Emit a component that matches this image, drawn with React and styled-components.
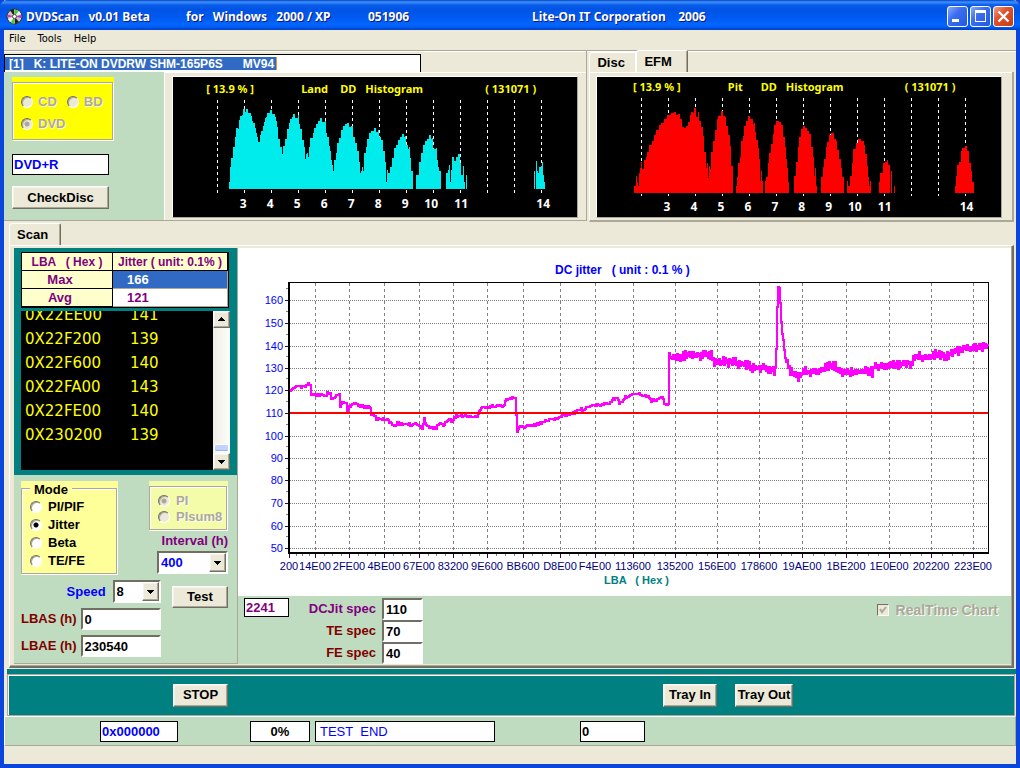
import React from "react";
import styled, { createGlobalStyle, css } from "styled-components";

const Global = createGlobalStyle`
  * { box-sizing: border-box; }
  body { margin: 0; background: #0831d9; }
  body, button, input, select { font: bold 13px/16px "Liberation Sans", Arial, sans-serif; }
`;

const c = {
  face: "#ece9d8",
  light: "#ffffff",
  shade: "#aca899",
  dark: "#716f64",
  mint: "#c0dcc0",
  teal: "#008080",
  blue: "#0000ff",
  purple: "#800080",
  maroon: "#800000",
  select: "#316ac5",
};

/* ---------- window frame ---------- */

const Window = styled.div`
  min-height: 100vh;
  display: flex;
  flex-direction: column;
  background: ${c.face};
  border: solid #0b46dc;
  border-width: 0 4px 4px;
`;

const TitleBar = styled.header`
  display: flex;
  align-items: center;
  height: 30px;
  margin: 0 -4px;
  padding: 3px 6px 0;
  border-radius: 7px 7px 0 0;
  background: linear-gradient(#0a3fc0 0, #3a93ff 2px, #0a5ce8 5px, #0054e3 9px, #0058ee 16px, #0266fe 25px, #005bf5 27px, #0040c0 30px);
  color: #fff;
  font: bold 12px/18px "Noto Sans", sans-serif;
  text-shadow: 1px 1px 0 #0a1883;
  white-space: pre;
  svg { flex: none; }
`;

const TitleText = styled.span`
  width: ${(p) => p.$w}px;
  flex: none;
`;

const TitleButtons = styled.div`
  display: flex;
  gap: 2px;
  margin-left: auto;
`;

const TitleButton = styled.button`
  width: 21px;
  height: 21px;
  padding: 0;
  border: 1px solid #fff;
  border-radius: 3px;
  background: ${(p) =>
    p.$close
      ? "linear-gradient(135deg, #f0a088, #e0512b 40%, #c83c12)"
      : "linear-gradient(135deg, #8cabf5, #3a6df0 40%, #2458e0)"};
  svg { display: block; }
`;

const MenuBar = styled.nav`
  display: flex;
  gap: 12px;
  height: 21px;
  padding: 0 5px 2px;
  border-bottom: 1px solid ${c.shade};
  box-shadow: 0 1px 0 #fff;
`;

const MenuItem = styled.button`
  padding: 0;
  border: 0;
  background: none;
  font: 11px/16px "DejaVu Sans Condensed", "DejaVu Sans", sans-serif;
`;

/* ---------- shared controls ---------- */

const raised = css`
  border: 1px solid;
  border-color: #fff ${c.dark} ${c.dark} #fff;
  box-shadow: inset -1px -1px 0 ${c.shade}, inset 1px 1px 0 #f6f4ea;
  background: ${c.face};
`;

const PushButton = styled.button`
  ${raised}
  width: ${(p) => p.$w}px;
  height: ${(p) => p.$h || 23}px;
  padding: 0;
  white-space: nowrap;
`;

const SunkenInput = styled.input`
  width: ${(p) => p.$w}px;
  height: 22px;
  padding: 0 2px;
  border: 2px solid;
  border-color: ${c.dark} #fff #fff ${c.dark};
  border-radius: 0;
  background: #fff;
  outline: 0;
`;

const FlatInput = styled.input`
  width: ${(p) => p.$w}px;
  height: ${(p) => p.$h || 21}px;
  padding: 0 1px;
  border: 1px solid #000;
  border-radius: 0;
  background: #fff;
  color: ${(p) => p.$color || "#000"};
  text-align: ${(p) => (p.$center ? "center" : "left")};
  outline: 0;
  ${(p) => p.$plain && "font-weight: normal; padding-left: 4px;"}
`;

const SelectBox = styled.span`
  position: relative;
  display: inline-block;
  width: ${(p) => p.$w}px;
  height: 23px;
  select {
    appearance: none;
    width: 100%;
    height: 100%;
    padding: 0 2px;
    border: 2px solid;
    border-color: ${c.dark} #fff #fff ${c.dark};
    border-radius: 0;
    background: #fff;
    color: ${(p) => p.$color || "#000"};
  }
  svg {
    ${raised}
    position: absolute;
    top: 2px;
    right: 2px;
    pointer-events: none;
  }
`;

const Arrow = ({ up, w = 17, h = 19 }) => (
  <svg width={w} height={h} viewBox="-7 -8 15 17" shapeRendering="crispEdges" aria-hidden="true">
    <path d={up ? "M0-2h1v1h1v1h1v1h1v1h-7v-1h1v-1h1v-1h1z" : "M-3-1h7v1h-1v1h-1v1h-1v1h-1v-1h-1v-1h-1v-1h-1z"} fill="#000" />
  </svg>
);

const Select = ({ w, color, value, id }) => (
  <SelectBox $w={w} $color={color}>
    <select id={id} defaultValue={value}>
      <option>{value}</option>
    </select>
    <Arrow />
  </SelectBox>
);

const Option = styled.label`
  display: flex;
  align-items: center;
  gap: ${(p) => p.$gap || 6}px;
  line-height: ${(p) => p.$line || 16}px;
  color: ${(p) => (p.$off ? c.shade : "#000")};
  ${(p) => p.$off && "text-shadow: 1px 1px 0 #fff;"}
  input {
    appearance: none;
    flex: none;
    width: 12px;
    height: 12px;
    margin: 0;
    border: 1px solid;
    border-color: ${c.dark} #fff #fff ${c.dark};
    border-radius: 50%;
    background: ${(p) => (p.$off ? c.face : "#fff")};
    box-shadow: inset 1px 1px 0 ${c.shade};
  }
  input:checked {
    background: radial-gradient(circle, ${(p) => (p.$off ? c.shade : "#000")} 2px, ${(p) => (p.$off ? c.face : "#fff")} 3px);
  }
`;

const Check = styled.label`
  display: flex;
  align-items: center;
  gap: 7px;
  color: ${c.shade};
  text-shadow: 1px 1px 0 #fff;
  font-size: 14px;
  span { position: relative; display: flex; }
  input {
    appearance: none;
    width: 12px;
    height: 12px;
    margin: 0;
    border: 1px solid;
    border-color: ${c.dark} #fff #fff ${c.dark};
    background: ${c.face};
  }
  svg { position: absolute; inset: 0; }
`;

const Group = styled.fieldset`
  min-width: 0;
  margin: 0;
  padding: ${(p) => p.$pad};
  border: 1px solid ${c.shade};
  box-shadow: 1px 1px 0 #fff, inset 1px 1px 0 #fff;
  display: flex;
  flex-direction: column;
  gap: ${(p) => p.$gap || 0}px;
  legend { padding: 3px 4px 0; line-height: 11px; background: #ffff99; }
`;

const GroupPad = styled.div`
  width: ${(p) => p.$w}px;
  padding: ${(p) => p.$top}px 1px 1px 0;
  background: ${(p) => p.$bg};
`;

const Row = styled.div`
  display: flex;
  gap: ${(p) => p.$gap || 0}px;
  align-items: center;
`;

/* ---------- upper panes ---------- */

const Upper = styled.section`
  display: flex;
  gap: 2px;
  height: 170px;
  padding: 0 2px 0 0;
`;

const DrivePane = styled.div`
  display: flex;
  flex-direction: column;
  flex: 583 1 0;
  padding-top: 3px;
  border: solid ${c.shade};
  border-width: 0 1px 1px 0;
`;

const DriveField = styled.input`
  width: 417px;
  height: 19px;
  padding: 1px 0 0 4px;
  border: solid #000;
  border-width: 1px 1px 0;
  border-radius: 0;
  color: #fff;
  white-space: pre;
  outline: 0;
  background: linear-gradient(90deg, ${c.select} 271px, #e0963c 271px, #e0963c 272px, #fff 272px) 0 2px / 100% 13px no-repeat #fff;
  font: bold 12px/16px "Liberation Sans", Arial, sans-serif;
`;

const DriveBody = styled.div`
  display: flex;
  flex: 1;
`;

const DiscColumn = styled.div`
  display: flex;
  flex-direction: column;
  align-items: flex-start;
  width: 161px;
  padding: 5px 8px;
  border-right: 1px solid #fff;
  background: ${c.mint};
`;

const Spaced = styled.div`
  display: flex;
  margin-top: ${(p) => p.$t}px;
`;

const PlotPane = styled.div`
  flex: 1;
  min-width: 0;
  padding: 3px ${(p) => p.$r}px 2px ${(p) => p.$l}px;
  border-top: 1px solid #fff;
`;

const PlotFrame = styled.div`
  border: 1px solid;
  border-color: #fff ${c.shade} ${c.shade} #fff;
  background: #000;
  overflow: hidden;
  svg { display: block; width: 100%; height: 140px; }
`;

const EfmPane = styled.div`
  display: flex;
  flex-direction: column;
  flex: 425 1 0;
`;

const Tabs = styled.div`
  display: flex;
  align-items: flex-end;
  height: ${(p) => p.$h}px;
  padding-left: ${(p) => p.$left || 0}px;
`;

const Tab = styled.button`
  width: ${(p) => p.$w}px;
  height: ${(p) => (p.$active ? 22 : 20)}px;
  padding: 0 0 0 7px;
  text-align: left;
  border: solid;
  border-width: 1px 1px 0;
  border-color: #fff ${(p) => (p.$active ? c.dark : "#fff")} #fff #fff;
  border-radius: 3px 2px 0 0;
  background: ${c.face};
  ${(p) => p.$active && `box-shadow: inset -1px 0 0 ${c.shade};`}
`;

const EfmPage = styled.div`
  flex: 1;
  border: solid;
  border-width: 0 2px 2px 1px;
  border-color: #fff ${c.shade} ${c.shade} #fff;
`;

/* ---------- scan page ---------- */

const ScanPage = styled.main`
  display: flex;
  flex: 1;
  margin: 0 2px 0 5px;
  padding: 2px 1px 2px 4px;
  border: solid;
  border-width: 1px 2px 2px 1px;
  border-color: #fff ${c.dark} ${c.dark} #fff;
  box-shadow: inset -1px -1px 0 ${c.shade};
`;

const Side = styled.div`
  flex: none;
  width: 224px;
  display: flex;
  flex-direction: column;
  border-right: 1px solid ${c.shade};
  border-bottom: 1px solid ${c.shade};
  background: ${c.mint};
`;

const Readout = styled.div`
  padding: 4px 7px 5px;
  background: ${c.teal};
`;

const Stats = styled.table`
  width: 208px;
  border: 1px solid #000;
  border-collapse: separate;
  border-spacing: 0;
  background: #fff;
  color: ${c.purple};
  font-size: 12px;
  th, td { height: 18px; padding: 0; line-height: 16px; white-space: pre; }
  th { width: 91px; background: #ffffcc; border: solid #000; border-width: 0 1px 1px 0; }
  thead th + th { width: 115px; }
  tbody { font-size: 13px; }
  td { padding-left: 14px; border: solid ${c.shade}; border-width: 0 1px 1px 0; }
  tbody th { padding-right: 14px; }
`;

const SelectedCell = styled.td`
  background: ${c.select};
  color: #fff;
`;

const LogBox = styled.div`
  display: flex;
  width: 209px;
  height: 159px;
  margin-top: 3px;
  background: #000;
`;

const Log = styled.ol`
  display: flex;
  flex: 1;
  flex-direction: column;
  justify-content: flex-end;
  margin: 0;
  padding: 0 0 23px 4px;
  overflow: hidden;
  list-style: none;
  color: #ff0;
  font: 15px/24px "DejaVu Sans", Verdana, sans-serif;
  li { flex: none; display: grid; grid-template-columns: 105px 1fr; }
`;

const ScrollBar = styled.div`
  display: flex;
  flex-direction: column;
  width: 17px;
  background: linear-gradient(90deg, #f0efe6, #fdfdfa);
`;

const ScrollButton = styled.button`
  ${raised}
  display: flex;
  width: 17px;
  height: 17px;
  padding: 0;
`;

const Thumb = styled.div`
  height: 8px;
  margin: auto 1px 1px;
  border: 1px solid #fff;
  border-radius: 2px;
  background: #c1d2fb;
  box-shadow: inset 0 -1px 0 #98b0e8;
`;

const Form = styled.div`
  display: flex;
  justify-content: space-between;
  align-items: flex-start;
  padding: ${(p) => p.$t}px 9px 0 7px;
`;

const Stack = styled.div`
  display: flex;
  flex-direction: column;
  align-items: flex-end;
  gap: ${(p) => p.$gap}px;
`;

const Caption = styled.label`
  color: ${(p) => p.$color};
  white-space: nowrap;
`;

const Right = styled.div`
  display: flex;
  flex-direction: column;
  flex: 1;
  min-width: 0;
  background: ${c.mint};
`;

const ChartPane = styled.div`
  padding-top: 2px;
  background: #fff;
  svg { display: block; width: 100%; height: 346px; }
`;

const SpecBar = styled.div`
  display: flex;
  align-items: flex-start;
  padding: 2px 13px 0 6px;
`;

const Specs = styled.div`
  display: grid;
  grid-template-columns: 87px 41px;
  align-items: center;
  gap: 0 6px;
  justify-items: end;
`;

const Push = styled.div`
  margin: 4px 0 0 auto;
`;

/* ---------- footer ---------- */

const TealStrip = styled.div`
  height: 5px;
  margin: 1px 0 0 3px;
  background: ${c.teal};
`;

const Commands = styled.div`
  display: flex;
  align-items: center;
  gap: 18px;
  height: 42px;
  margin: 0 1px 0 3px;
  padding-left: 165px;
  background: ${c.teal};
  border: 1px solid ${c.shade};
  box-shadow: inset 1px 1px 0 #fff;
`;

const Gap = styled.span`
  flex: 0 0 ${(p) => p.$w}px;
`;

const Status = styled.div`
  display: flex;
  align-items: center;
  height: 30px;
  padding: 0 0 0 95px;
  background: ${c.mint};
  border: solid;
  border-width: 1px;
  border-color: #fff ${c.shade} ${c.shade} #fff;
`;

const BottomBar = styled.footer`
  height: 18px;
`;

/* ---------- histograms ---------- */

// Samples are [x, y] pairs in thirds of a pixel; each holds until the next one.
const LAND = [
  [207,395],[210,350],[213,325],[219,290],[225,262],[228,235],[234,238],[237,210],[240,198],[246,195],[249,178],[255,186],[258,178],[264,190],[273,197],[276,212],[279,220],[285,235],[288,250],[291,262],[294,276],[300,255],[303,244],[309,228],[312,216],[315,205],[318,200],[321,190],[327,188],[330,181],[336,192],[345,202],[348,212],[351,232],[354,268],[360,290],[366,312],[369,288],[375,268],[381,238],[387,220],[390,208],[396,200],[399,192],[405,205],[414,196],[417,222],[420,236],[426,270],[432,292],[435,327],[438,312],[441,308],[444,320],[447,292],[450,264],[459,250],[462,235],[468,222],[474,212],[480,205],[486,216],[495,214],[498,250],[501,260],[507,288],[510,304],[513,330],[516,345],[519,362],[522,330],[528,308],[531,278],[537,265],[543,240],[549,228],[555,222],[561,219],[567,230],[573,228],[579,262],[585,280],[591,302],[597,335],[600,370],[603,362],[606,350],[609,364],[612,310],[618,290],[621,266],[627,250],[633,242],[642,234],[648,246],[654,240],[657,262],[663,270],[669,304],[675,335],[678,395],[681,360],[684,370],[690,350],[696,325],[702,294],[708,284],[714,270],[720,260],[726,252],[732,262],[735,258],[738,285],[744,296],[747,290],[750,325],[753,362],[759,416],
  [768,375],[777,335],[783,308],[789,285],[795,272],[801,268],[807,255],[813,268],[816,264],[819,298],[828,295],[831,330],[834,350],[837,362],[843,416],
  [858,368],[864,360],[867,345],[870,396],[873,360],[876,322],[882,332],[888,320],[894,312],[900,340],[903,375],[909,348],[912,396],[915,416],[918,375],[921,416],
  [1122,362],[1125,416],[1128,333],[1131,362],[1134,370],[1137,350],[1143,348],[1146,336],[1149,375],[1152,396],[1155,416],
];

const PIT = [
  [162,558],[168,528],[171,545],[174,558],[177,520],[180,505],[183,486],[186,508],[192,480],[198,470],[201,455],[207,435],[216,422],[222,405],[228,390],[237,375],[243,368],[252,356],[261,345],[267,346],[273,340],[282,336],[288,344],[294,342],[300,356],[306,380],[312,384],[318,378],[324,366],[330,346],[333,336],[339,340],[342,324],[348,350],[354,335],[357,362],[363,382],[369,408],[372,456],[378,505],[381,488],[384,535],[387,498],[390,508],[393,455],[399,422],[405,390],[411,358],[414,348],[423,333],[429,348],[435,352],[438,378],[444,404],[450,438],[453,498],[459,579],
  [468,558],[471,530],[474,490],[480,470],[483,424],[489,408],[492,378],[498,362],[504,348],[510,358],[519,372],[522,368],[525,396],[528,420],[534,445],[537,476],[540,544],[543,514],[546,544],[549,579],
  [555,544],[558,530],[564,490],[567,460],[573,432],[579,402],[582,374],[588,362],[597,366],[603,376],[609,410],[615,440],[618,478],[621,505],[624,545],[627,579],
  [642,528],[648,486],[654,440],[657,410],[663,388],[669,378],[675,384],[681,392],[687,402],[693,440],[699,472],[702,528],[705,505],[708,558],[711,579],
  [723,532],[729,502],[732,476],[738,440],[741,425],[747,404],[753,400],[762,418],[768,424],[771,450],[777,478],[783,505],[786,530],[792,579],
  [801,544],[804,558],[810,528],[816,490],[819,448],[828,430],[834,416],[843,424],[852,435],[855,462],[861,498],[864,530],[867,558],[870,544],[873,579],
  [897,545],[900,520],[906,518],[909,490],[915,486],[921,480],[924,494],[930,579],[933,514],[936,579],[942,558],[945,579],
  [1125,558],[1128,528],[1131,496],[1137,486],[1143,454],[1146,444],[1155,438],[1161,454],[1167,490],[1173,514],[1176,545],[1182,579],
];

function columns(samples, ox, oy, base) {
  let d = `M${samples[0][0] / 3 - ox} ${base}`;
  samples.forEach(([x, y]) => {
    d += `H${Math.round(x / 3 - ox)}V${Math.round(y / 3 - oy)}`;
  });
  return d + `V${base}Z`;
}

const BINS = [["3", 70], ["4", 97], ["5", 124], ["6", 151], ["7", 178], ["8", 205], ["9", 232], ["10", 258], ["11", 288], ["14", 370]];
const GRID = [44, 71, 98, 125, 152, 179, 206, 233, 260, 287, 314, 341, 368];

function Histogram({ title, names, d, color, top, bottom, labelY, titleY, shareX, totalX }) {
  return (
    <svg viewBox="0 0 404 140" role="img" aria-label={title}>
      <g stroke="#fff" strokeDasharray="3 3" shapeRendering="crispEdges">
        {GRID.map((x) => <line key={x} x1={x + 0.5} x2={x + 0.5} y1={top} y2={bottom} />)}
      </g>
      <path d={d} fill={color} shapeRendering="crispEdges" />
      <g fill="#ff0" fontFamily="Noto Sans, sans-serif" fontWeight="bold" fontSize="11">
        <text x={shareX} y={titleY}>[ 13.9&nbsp;% ]</text>
        {names.map(([t, x]) => <text key={t} x={x} y={titleY}>{t}</text>)}
        <text x={totalX} y={titleY}>( 131071 )</text>
      </g>
      <g fill="#fff" fontFamily="Noto Sans, sans-serif" fontWeight="bold" fontSize="12" textAnchor="middle">
        {BINS.map(([t, x]) => <text key={t} x={x} y={labelY}>{t}</text>)}
      </g>
    </svg>
  );
}

/* ---------- jitter chart ---------- */

const TRACE = [
  [152,428],[155,418],[165,412],[200,411],[205,402],[213,405],[213,440],[220,434],[262,438],[263,425],[273,432],[273,450],[280,442],[300,435],[303,468],[312,455],[321,460],[321,482],[330,472],[345,460],[352,458],[360,468],[375,470],[375,482],[380,472],[393,470],[393,492],[405,495],[412,508],[425,505],[445,508],[455,522],[470,526],[475,519],[490,525],[500,519],[515,525],[525,521],[540,525],[550,535],[555,508],[560,520],[568,534],[590,534],[600,521],[615,525],[622,510],[640,512],[650,498],[715,500],[720,480],[730,472],[795,466],[800,450],[825,443],[830,443],[832,540],[834,546],[840,532],[850,532],[870,526],[890,525],[910,516],[930,508],[950,508],[960,498],[990,492],[1010,486],[1016,476],[1033,480],[1045,472],[1055,466],[1085,465],[1110,458],[1120,448],[1135,442],[1140,460],[1150,458],[1156,442],[1185,435],[1195,428],[1210,438],[1225,436],[1235,452],[1255,448],[1270,438],[1274,463],[1287,460],[1287,320],[1300,325],[1340,315],[1390,315],[1418,316],[1423,335],[1450,335],[1490,338],[1520,345],[1540,355],[1570,352],[1605,360],[1608,350],[1612,280],[1614,172],[1617,112],[1620,115],[1624,172],[1627,240],[1632,270],[1637,320],[1645,345],[1655,365],[1680,382],[1690,368],[1740,362],[1762,355],[1765,345],[1790,348],[1795,362],[1820,366],[1860,365],[1900,365],[1905,350],[1960,346],[2020,338],[2025,320],[2070,322],[2090,315],[2115,318],[2130,322],[2135,305],[2160,303],[2170,294],[2175,288],[2185,295],[2205,298],[2225,290],[2245,288],[2248,280],
];

function jitterPath() {
  let d = "";
  let seg = 0;
  for (let px = 51; px <= 749; px++) {
    const x = px * 3;
    while (seg < TRACE.length - 2 && TRACE[seg + 1][0] < x) seg++;
    const [x0, y0] = TRACE[seg];
    const [x1, y1] = TRACE[seg + 1];
    const t = x1 === x0 ? 1 : Math.min(1, Math.max(0, (x - x0) / (x1 - x0)));
    const y = (y0 + (y1 - y0) * t) / 3;
    const wave = Math.sin(px * 12.9898) * 43758.5453;
    const rnd = wave - Math.floor(wave);
    const spike = x > 1605 && x < 1640;
    let off = Math.round((rnd - 0.5) * 3);
    if (x > 1287) off = (px % 2 ? 1 : -1) * (1 + rnd * rnd * 4);
    if (spike) off = 0;
    const row = Math.round(y + off);
    d += d ? `H${px}V${row}` : `M${px} ${row}`;
  }
  return d;
}

const Y_TICKS = [[160, 50], [150, 73], [140, 96], [130, 118], [120, 140], [110, 163], [100, 186], [90, 208], [80, 230], [70, 253], [60, 276], [50, 298]];
const X_TICKS = [["200", 50], ["14E00", 76], ["2FE00", 110], ["4BE00", 145], ["67E00", 180], ["83200", 214], ["9E600", 248], ["BB600", 284], ["D8E00", 321], ["F4E00", 356], ["113600", 394], ["135200", 436], ["156E00", 478], ["178600", 520], ["19AE00", 563], ["1BE200", 607], ["1E0E00", 650], ["202200", 692], ["223E00", 734]];

function JitterChart() {
  return (
    <svg viewBox="0 0 771 346" role="img" aria-label="DC jitter chart" fontFamily="Liberation Sans, Arial, sans-serif" fontWeight="normal">
      <g fontWeight="bold">
        <text x="316" y="24" fill="#0000ff" fontSize="12">DC jitter &nbsp;&nbsp;( unit : 0.1 % )</text>
        <text x="365" y="334" fill={c.teal} fontSize="11">LBA &nbsp;&nbsp;( Hex )</text>
      </g>
      <g shapeRendering="crispEdges" stroke="#808080">
        {Y_TICKS.map(([v, y]) => <line key={v} x1="51" x2="749" y1={y + 0.5} y2={y + 0.5} strokeDasharray="1 1" />)}
        {X_TICKS.slice(1).map(([v, x]) => <line key={v} x1={x + 0.5} x2={x + 0.5} y1="33" y2="302" strokeDasharray="3 3" />)}
        {Y_TICKS.map(([v, y]) => <line key={v} x1="47" x2="50" y1={y - 11.5} y2={y - 11.5} />)}
        {X_TICKS.slice(0, -1).map(([v, x], i) => {
          const step = (X_TICKS[i + 1][1] - x) / 4;
          return [1, 2, 3].map((k) => <line key={v + k} x1={Math.round(x + step * k) + 0.5} x2={Math.round(x + step * k) + 0.5} y1="303" y2="306" />);
        })}
      </g>
      <g shapeRendering="crispEdges" stroke="#400040">
        {Y_TICKS.map(([v, y]) => <line key={v} x1="46" x2="50" y1={y + 0.5} y2={y + 0.5} />)}
        {X_TICKS.map(([v, x]) => <line key={v} x1={x + 0.5} x2={x + 0.5} y1="303" y2="308" />)}
      </g>
      <g shapeRendering="crispEdges" fill="none">
        <path d="M50 32.5H749.5V303" stroke="#000" />
        <path d="M50 32V303H750" stroke="#000" strokeWidth="2" />
        <path d={jitterPath()} stroke="#ff00ff" strokeWidth="2" />
        <path d="M51 163H749" stroke="#ff0000" strokeWidth="2" />
      </g>
      <g fill="#0000ff" fontSize="11" textAnchor="end">
        {Y_TICKS.map(([v, y]) => <text key={v} x="44" y={y + 4}>{v}</text>)}
      </g>
      <g fill="#000080" fontSize="11" textAnchor="middle">
        {X_TICKS.map(([v, x]) => <text key={v} x={x} y="320">{v}</text>)}
      </g>
    </svg>
  );
}

const DiscIcon = () => (
  <svg width="17" height="17" viewBox="0 0 17 17" aria-hidden="true">
    <circle cx="8.5" cy="8.5" r="7.5" fill="#c8c8c8" stroke="#303030" />
    <path d="M8.5 8.5 4 2.5 8 1z" fill="#202020" />
    <path d="M8.5 8.5 9 1.5 13 3z" fill="#40d030" />
    <path d="M8.5 8.5 13 3 15 6z" fill="#f0f0f0" />
    <path d="M8.5 8.5 15.5 7 15.5 10z" fill="#b030c0" />
    <path d="M8.5 8.5 13 14 9 16z" fill="#202020" />
    <path d="M8.5 8.5 8 16 5 15z" fill="#40d030" />
    <path d="M8.5 8.5 4 14 2 11z" fill="#f4f4f4" />
    <path d="M8.5 8.5 1.5 9.5 1.5 6.5z" fill="#d040a0" />
    <circle cx="8.5" cy="8.5" r="2" fill="#fff" stroke="#505050" />
  </svg>
);

const LOG = [["0X22EE00", "141"], ["0X22F200", "139"], ["0X22F600", "140"], ["0X22FA00", "143"], ["0X22FE00", "140"], ["0X230200", "139"]];

export default function App() {
  return (
    <>
      <Global />
      <Window>
        <TitleBar>
          <DiscIcon />
          <Gap $w={3} />
          <TitleText $w={160}>{"DVDScan   v0.01 Beta"}</TitleText>
          <TitleText $w={182}>{"for   Windows   2000 / XP"}</TitleText>
          <TitleText $w={164}>051906</TitleText>
          <TitleText $w={200}>{"Lite-On IT Corporation    2006"}</TitleText>
          <TitleButtons>
            <TitleButton aria-label="Minimize">
              <svg width="19" height="19" aria-hidden="true"><path d="M4 12h7v3H4z" fill="#fff" /></svg>
            </TitleButton>
            <TitleButton aria-label="Maximize">
              <svg width="19" height="19" aria-hidden="true"><path d="M4 3h11v12H4zM5 6v8h9V6z" fill="#fff" fillRule="evenodd" /></svg>
            </TitleButton>
            <TitleButton $close aria-label="Close">
              <svg width="19" height="19" aria-hidden="true"><path d="M4.5 4.5l10 10M14.5 4.5l-10 10" stroke="#fff" strokeWidth="2.4" /></svg>
            </TitleButton>
          </TitleButtons>
        </TitleBar>

        <MenuBar>
          <MenuItem>File</MenuItem>
          <MenuItem>Tools</MenuItem>
          <MenuItem>Help</MenuItem>
        </MenuBar>

        <Upper>
          <DrivePane>
            <DriveField aria-label="Drive" readOnly value={"[1]   K: LITE-ON DVDRW SHM-165P6S      MV94"} />
            <DriveBody>
              <DiscColumn>
                <GroupPad $w={102} $top={5} $bg="#ffff00">
                  <Group $pad="11px 8px 7px" $gap={6} aria-label="Disc type">
                    <Row $gap={10}>
                      <Option $off $gap={5}><input type="radio" name="disc" disabled />CD</Option>
                      <Option $off $gap={5}><input type="radio" name="disc" disabled />BD</Option>
                    </Row>
                    <Option $off $gap={5}><input type="radio" name="disc" disabled defaultChecked />DVD</Option>
                  </Group>
                </GroupPad>
                <Spaced $t={13}><FlatInput $w={97} $color={c.blue} aria-label="Media" readOnly value="DVD+R" /></Spaced>
                <Spaced $t={11}><PushButton $w={97}>CheckDisc</PushButton></Spaced>
              </DiscColumn>
              <PlotPane $l={7} $r={8}>
                <PlotFrame>
                  <Histogram title="Land DD Histogram" names={[["Land", 128], ["DD", 167], ["Histogram", 192]]} d={columns(LAND, 13, 27, 112)} color="#00ebeb" top={23} bottom={116} labelY={131} titleY={16} shareX={33} totalX={312} />
                </PlotFrame>
              </PlotPane>
            </DriveBody>
          </DrivePane>
          <EfmPane>
            <Tabs $h={21}>
              <Tab $w={47}>Disc</Tab>
              <Tab $w={52} $active>EFM</Tab>
            </Tabs>
            <EfmPage>
              <PlotPane $l={6} $r={10}>
                <PlotFrame>
                  <Histogram title="Pit DD Histogram" names={[["Pit", 131], ["DD", 164], ["Histogram", 189]]} d={columns(PIT, 17, 77, 116)} color="#ff0000" top={21} bottom={119} labelY={134} titleY={14} shareX={36} totalX={308} />
                </PlotFrame>
              </PlotPane>
            </EfmPage>
          </EfmPane>
        </Upper>

        <Tabs $h={24} $left={5}>
          <Tab $w={52} $active>Scan</Tab>
        </Tabs>
        <ScanPage>
          <Side>
            <Readout>
              <Stats>
                <thead><tr><th>{"LBA   ( Hex )"}</th><th>{"Jitter ( unit: 0.1% )"}</th></tr></thead>
                <tbody>
                  <tr><th>Max</th><SelectedCell>166</SelectedCell></tr>
                  <tr><th>Avg</th><td>121</td></tr>
                </tbody>
              </Stats>
              <LogBox>
                <Log>
                  {LOG.map(([a, v]) => <li key={a}><span>{a}</span><span>{v}</span></li>)}
                </Log>
                <ScrollBar>
                  <ScrollButton aria-label="Scroll up"><Arrow up w={15} h={15} /></ScrollButton>
                  <Thumb />
                  <ScrollButton aria-label="Scroll down"><Arrow w={15} h={15} /></ScrollButton>
                </ScrollBar>
              </LogBox>
            </Readout>

            <Form $t={6}>
              <GroupPad $w={97} $top={0} $bg="#ffff99">
                <Group $pad="3px 8px">
                  <legend>Mode</legend>
                  {["PI/PIF", "Jitter", "Beta", "TE/FE"].map((m) => (
                    <Option key={m} $line={18}><input type="radio" name="mode" defaultChecked={m === "Jitter"} />{m}</Option>
                  ))}
                </Group>
              </GroupPad>
              <Stack $gap={2}>
                <GroupPad $w={79} $top={5} $bg="#f4fcaa">
                  <Group $pad="6px 8px 4px" aria-label="Error type">
                    <Option $off><input type="radio" name="pi" disabled defaultChecked />PI</Option>
                    <Option $off><input type="radio" name="pi" disabled />PIsum8</Option>
                  </Group>
                </GroupPad>
                <Caption htmlFor="interval" $color={c.purple}>Interval (h)</Caption>
                <Select id="interval" w={71} color={c.blue} value="400" />
              </Stack>
            </Form>
            <Form $t={5}>
              <Stack $gap={5}>
                <Row $gap={7}><Caption htmlFor="speed" $color={c.blue}>Speed</Caption><Select id="speed" w={48} value="8" /></Row>
                <Row $gap={4}><Caption htmlFor="lbas" $color={c.maroon}>LBAS (h)</Caption><SunkenInput id="lbas" $w={80} defaultValue="0" /></Row>
                <Row $gap={4}><Caption htmlFor="lbae" $color={c.maroon}>LBAE (h)</Caption><SunkenInput id="lbae" $w={80} defaultValue="230540" /></Row>
              </Stack>
              <Spaced $t={6}><PushButton $w={56} $h={22}>Test</PushButton></Spaced>
            </Form>
          </Side>

          <Right>
            <ChartPane><JitterChart /></ChartPane>
            <SpecBar>
              <FlatInput $w={45} $h={19} $color={c.purple} aria-label="Samples" readOnly value="2241" />
              <Specs>
                <Caption htmlFor="dc" $color={c.purple}>DCJit spec</Caption><SunkenInput id="dc" $w={41} defaultValue="110" />
                <Caption htmlFor="te" $color={c.maroon}>TE spec</Caption><SunkenInput id="te" $w={41} defaultValue="70" />
                <Caption htmlFor="fe" $color={c.maroon}>FE spec</Caption><SunkenInput id="fe" $w={41} defaultValue="40" />
              </Specs>
              <Push>
                <Check>
                  <span>
                    <input type="checkbox" disabled defaultChecked />
                    <svg width="12" height="12" aria-hidden="true"><path d="M3 5l2 3 4-5" fill="none" stroke={c.shade} strokeWidth="2" /></svg>
                  </span>
                  RealTime Chart
                </Check>
              </Push>
            </SpecBar>
          </Right>
        </ScanPage>

        <TealStrip />
        <Commands>
          <PushButton $w={55}>STOP</PushButton>
          <Gap $w={399} />
          <PushButton $w={54}>Tray In</PushButton>
          <PushButton $w={58}>Tray Out</PushButton>
        </Commands>
        <Status>
          <FlatInput $w={78} $color={c.blue} aria-label="Address" readOnly value="0x000000" />
          <Gap $w={72} />
          <FlatInput $w={60} $center aria-label="Progress" readOnly value="0%" />
          <Gap $w={5} />
          <FlatInput $w={180} $plain $color={c.blue} aria-label="Status" readOnly value="TEST  END" />
          <Gap $w={85} />
          <FlatInput $w={65} aria-label="Count" readOnly value="0" />
        </Status>
        <BottomBar />
      </Window>
    </>
  );
}
